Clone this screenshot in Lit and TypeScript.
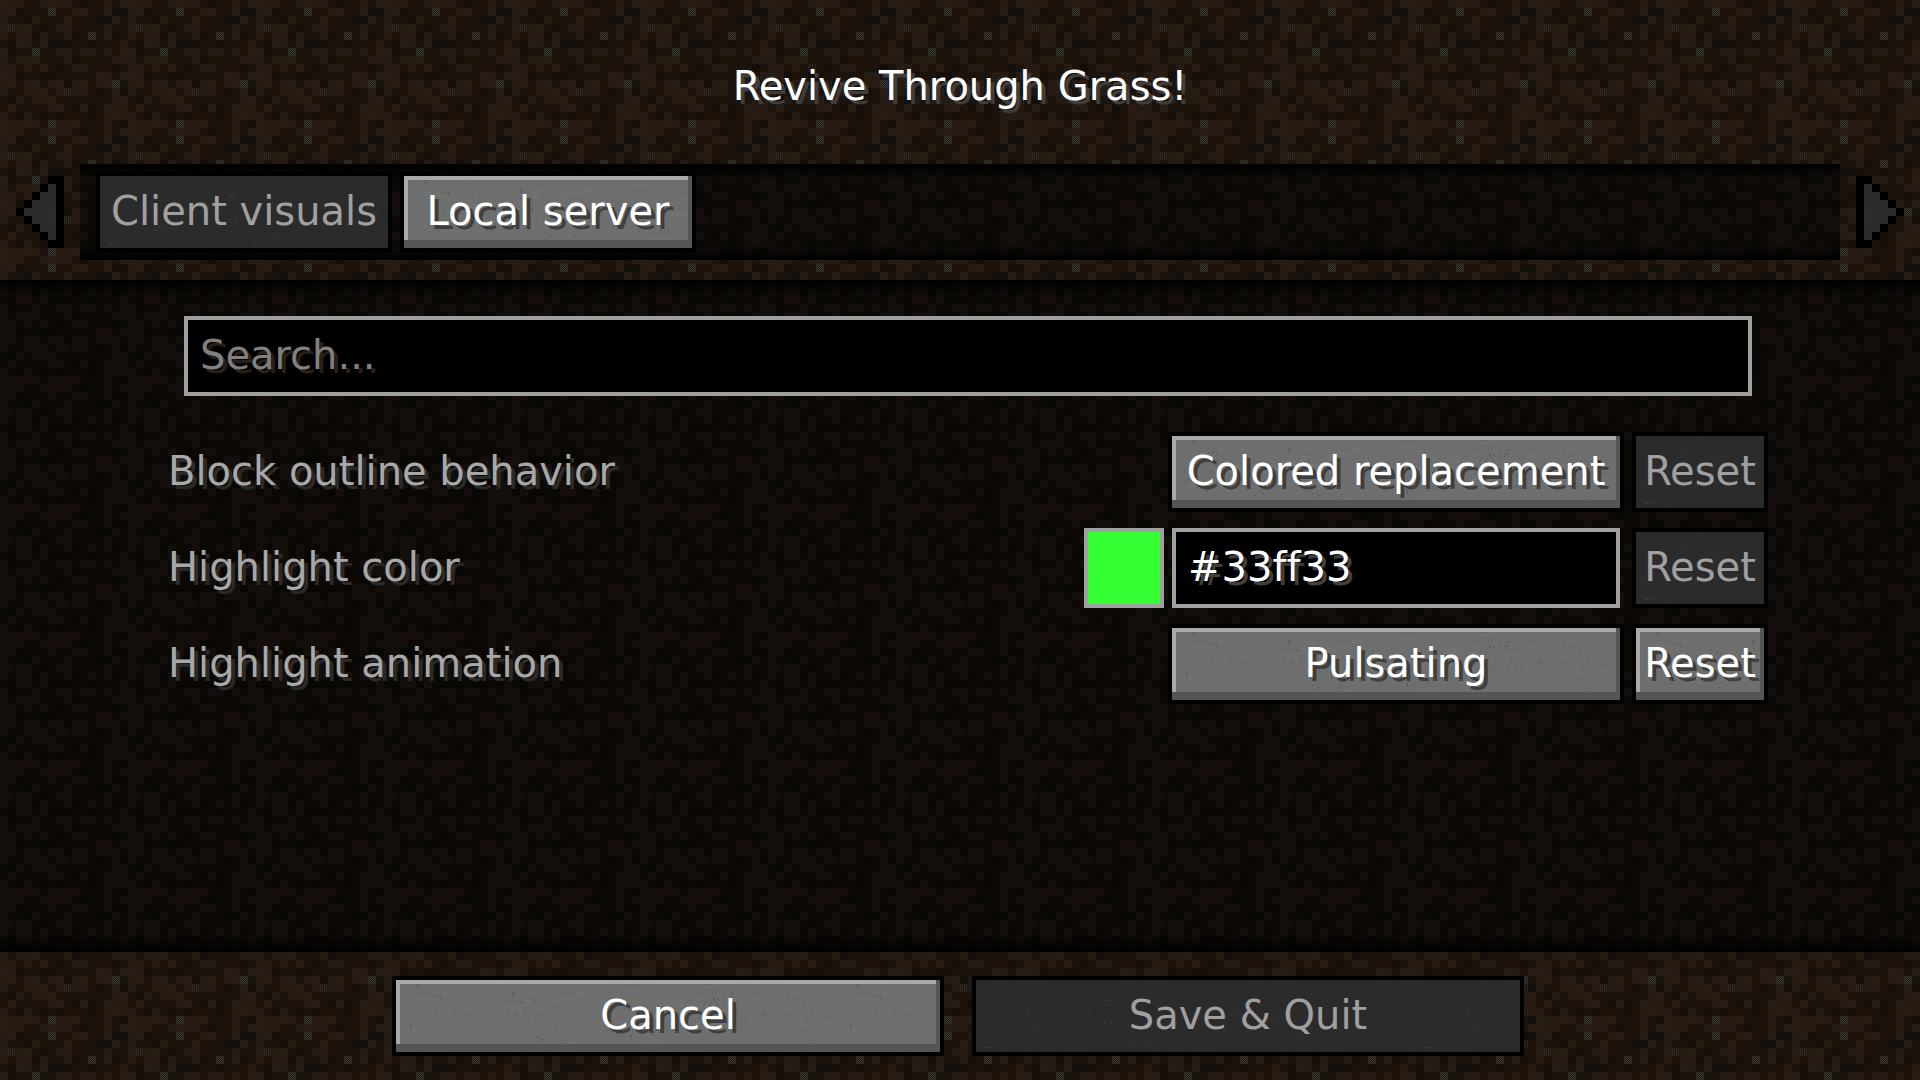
import { LitElement, html, css, svg, unsafeCSS, nothing } from "lit";
import { customElement, property, state } from "lit/decorators.js";

/* Dirt tile: 16 x 16 cells. d = dark, m = middle, l = light, s = speckled, g = pebble. */
const DIRT = [
  "lllmmllllmdmmlml",
  "lldmmmgmmllmmldd",
  "lmmdlmmmlmmmddlm",
  "lsllmdmllmmmmlmm",
  "lmlldlmmldmgmldm",
  "mdllmldddmmdmmml",
  "ldmmgmmllmllmlml",
  "lmlllmmmldmmmmll",
  "llmlmlmdmllmmmdm",
  "lldmmddmmmmmllml",
  "llmllmlldllmllgm",
  "lmmlllmlsllmdmld",
  "mdlmlllmmmmmmmll",
  "mlmmmmllmdldmlll",
  "lmdlmdmdmmmdmlll",
  "lllllmglllmmmlmd",
];

interface DirtPalette {
  cells: Record<string, string>;
  pebble: string;
  fleck: string;
}

const LIT: DirtPalette = {
  cells: { d: "#130e0a", m: "#1d130d", l: "#251b13", s: "#211812", g: "#231d18" },
  pebble: "#363636",
  fleck: "#33291f",
};
const SHADED: DirtPalette = {
  cells: { d: "#090703", m: "#0b0804", l: "#130e0b", s: "#0f0b08", g: "#0f0c08" },
  pebble: "#17140f",
  fleck: "#201412",
};

const asUrl = (source: string) => unsafeCSS(`url("data:image/svg+xml,${encodeURIComponent(source)}")`);

function dirtTile(palette: DirtPalette): string {
  let out = "";
  DIRT.forEach((row, y) => {
    [...row].forEach((cell, x) => {
      const px = x * 8;
      const py = y * 8;
      out += `<rect x="${px}" y="${py}" width="8" height="8" fill="${palette.cells[cell]}"/>`;
      if (cell === "g" || cell === "s") {
        const step = cell === "g" ? 2 : 4;
        for (let j = 0; j < 8; j += 1) {
          for (let i = (j * step) / 2 % step; i < 8; i += step) {
            out += `<rect x="${px + i}" y="${py + j}" width="1" height="1" fill="${palette.pebble}"/>`;
          }
        }
      } else if (cell === "l" && (x * 7 + y * 5) % 3 === 0) {
        for (let j = 1; j < 8; j += 3) {
          for (let i = 1; i < 8; i += 3) {
            out += `<rect x="${px + i}" y="${py + j}" width="1" height="1" fill="${palette.fleck}"/>`;
          }
        }
      }
    });
  });
  return `<svg xmlns="http://www.w3.org/2000/svg" width="128" height="128" shape-rendering="crispEdges">${out}</svg>`;
}

/* Stone grain: small clusters of one-pixel specks on a transparent ground. */
function stoneGrain(dark: string, light: string, patch: string): string {
  let seed = 41;
  const next = (n: number) => {
    seed = (seed * 1103515245 + 12345) % 2147483648;
    return Math.floor((seed / 2147483648) * n);
  };
  let out = "";
  for (let k = 0; k < 40; k += 1) {
    out += `<rect x="${next(108) * 4}" y="${next(17) * 4}" width="${8 + next(3) * 4}" height="4" fill="${patch}"/>`;
  }
  for (let k = 0; k < 56; k += 1) {
    const x = next(430);
    const y = next(66);
    const fill = k % 3 === 0 ? light : dark;
    const dots = 1 + next(5);
    for (let i = 0; i < dots; i += 1) {
      out += `<rect x="${x + next(5) * 2}" y="${y + next(3) * 2}" width="1" height="1" fill="${fill}"/>`;
    }
  }
  return `<svg xmlns="http://www.w3.org/2000/svg" width="440" height="72" shape-rendering="crispEdges">${out}</svg>`;
}

const dirtUrl = asUrl(dirtTile(LIT));
const shadedDirtUrl = asUrl(dirtTile(SHADED));
const stoneUrl = asUrl(stoneGrain("#4c4c4c", "#8a8a8a", "#717171"));
const slateUrl = asUrl(stoneGrain("#3b2a20", "#484848", "#2b2b2b"));

const controls = css`
  * {
    box-sizing: border-box;
  }
  button,
  input,
  label,
  h1 {
    margin: 0;
    font: 400 40px/48px "DejaVu Sans", Verdana, sans-serif;
    font-variant-ligatures: none;
  }
  .stone {
    height: 80px;
    padding: 0 0 2px;
    border: 4px solid #000;
    border-radius: 0;
    color: #fff;
    text-align: center;
    white-space: nowrap;
    text-shadow: 4px 4px 0 #3e3e3e;
    background: #6e6e6e ${stoneUrl};
    box-shadow: inset 0 -8px 0 #555, inset -4px 0 0 #555, inset 4px 4px 0 #a9a9a9;
  }
  .stone:disabled {
    color: #a0a0a0;
    text-shadow: none;
    background: #2b2b2b ${slateUrl};
    box-shadow: none;
  }
  .box {
    height: 80px;
    min-width: 0;
    padding: 0 12px 2px;
    border: 4px solid #a0a0a0;
    border-radius: 0;
    outline: none;
    color: #fff;
    background: #000;
    text-shadow: 4px 4px 0 #3e3e3e;
  }
`;

@customElement("option-row")
class OptionRow extends LitElement {
  @property() name = "";
  @property() value = "";
  @property() kind: "cycle" | "color" = "cycle";
  @property({ type: Boolean }) changed = false;

  static styles = [
    controls,
    css`
      :host {
        display: flex;
        align-items: center;
      }
      .name {
        flex: 1;
        padding-bottom: 2px;
        color: #a8a8a8;
        text-shadow: 4px 4px 0 #2a2a2a;
      }
      .swatch {
        width: 80px;
        height: 80px;
        margin-right: 4px;
        padding: 0;
        border: 4px solid #a0a0a0;
        border-radius: 0;
        background: none;
        appearance: none;
      }
      .swatch::-webkit-color-swatch-wrapper {
        padding: 0;
      }
      .swatch::-webkit-color-swatch {
        border: 0;
        border-radius: 0;
      }
      .field {
        display: flex;
        width: 456px;
      }
      .field .stone {
        flex: 1;
      }
      .field .box {
        flex: 1;
        margin: 0 4px;
      }
      .reset {
        width: 136px;
        margin-left: 8px;
      }
    `,
  ];

  render() {
    const color = this.kind === "color";
    return html`
      <label class="name" for="value">${this.name}</label>
      ${color
        ? html`<input class="swatch" type="color" aria-label=${this.name} .value=${this.value} />`
        : nothing}
      <div class="field">
        ${color
          ? html`<input class="box" id="value" type="text" spellcheck="false" .value=${this.value} />`
          : html`<button class="stone" id="value" type="button">${this.value}</button>`}
      </div>
      <button class="stone reset" type="button" ?disabled=${!this.changed}>Reset</button>
    `;
  }
}

@customElement("app-root")
class AppRoot extends LitElement {
  @state() private tab = "Client visuals";

  private options = [
    { name: "Block outline behavior", value: "Colored replacement", kind: "cycle", changed: false },
    { name: "Highlight color", value: "#33ff33", kind: "color", changed: false },
    { name: "Highlight animation", value: "Pulsating", kind: "cycle", changed: true },
  ];

  static styles = [
    controls,
    css`
      :host {
        display: flex;
        flex-direction: column;
        min-height: 100vh;
        background: #1d130d ${dirtUrl} fixed;
      }
      .header {
        padding: 60px 0 20px;
      }
      .title {
        margin-bottom: 52px;
        line-height: 52px;
        text-align: center;
        color: #fff;
        text-shadow: 4px 4px 0 #3e3e3e;
      }
      .tabs {
        display: flex;
        align-items: center;
        gap: 16px;
        padding: 0 16px;
      }
      .arrow {
        display: flex;
        padding: 0;
        border: 0;
        background: none;
      }
      .arrow svg {
        width: 48px;
        height: 72px;
      }
      .strip,
      .list {
        flex: 1;
        display: flex;
        background: linear-gradient(#000, transparent 16px, transparent calc(100% - 16px), #000),
          #0b0804 ${shadedDirtUrl} fixed;
      }
      .strip {
        gap: 8px;
        padding: 8px 16px;
      }
      .tab {
        min-width: 296px;
      }
      .list {
        flex-direction: column;
        gap: 36px;
        padding: 36px 152px 36px 168px;
      }
      .search {
        margin: 0 16px;
      }
      .search::placeholder {
        color: #808080;
        opacity: 1;
        text-shadow: 4px 4px 0 #2a1f18;
      }
      .rows {
        display: flex;
        flex-direction: column;
        gap: 16px;
      }
      .footer {
        display: flex;
        justify-content: center;
        gap: 28px;
        padding: 24px 4px 24px 0;
      }
      .action {
        width: 552px;
      }
    `,
  ];

  private arrow(next: boolean) {
    return html`<button class="arrow" type="button" disabled aria-label=${next ? "Next tabs" : "Previous tabs"}>
      <svg viewBox="0 0 6 9" shape-rendering="crispEdges" aria-hidden="true">
        ${svg`<g transform=${next ? "translate(6 0) scale(-1 1)" : "translate(0 0)"}>
          <path fill="#000" d="M6 0H4V1H3V2H2V3H1V4H0V5H1V6H2V7H3V8H4V9H6Z"/>
          <path fill="#2b2b2b" d="M5 1H4V2H3V3H2V4H1V5H2V6H3V7H4V8H5Z"/>
          <path fill="#484848" d="M4 4.5h.12v.12H4zM4.25 4.75h.12v.12h-.12zM4.5 4.5h.12v.12H4.5zM4.4 5.5h.12v.12H4.4zM4.1 5.7h.12v.12H4.1z"/>
        </g>`}
      </svg>
    </button>`;
  }

  render() {
    return html`
      <header class="header">
        <h1 class="title">Revive Through Grass!</h1>
        <nav class="tabs">
          ${this.arrow(false)}
          <div class="strip">
            ${["Client visuals", "Local server"].map(
              (name) => html`<button
                class="stone tab"
                type="button"
                ?disabled=${this.tab === name}
                @click=${() => (this.tab = name)}
              >${name}</button>`
            )}
          </div>
          ${this.arrow(true)}
        </nav>
      </header>
      <main class="list">
        <input class="box search" type="text" placeholder="Search..." aria-label="Search" />
        <div class="rows">
          ${this.options.map(
            (o) => html`<option-row
              .name=${o.name}
              .value=${o.value}
              .kind=${o.kind as "cycle" | "color"}
              .changed=${o.changed}
            ></option-row>`
          )}
        </div>
      </main>
      <footer class="footer">
        <button class="stone action" type="button">Cancel</button>
        <button class="stone action" type="button" disabled>Save &amp; Quit</button>
      </footer>
    `;
  }
}
